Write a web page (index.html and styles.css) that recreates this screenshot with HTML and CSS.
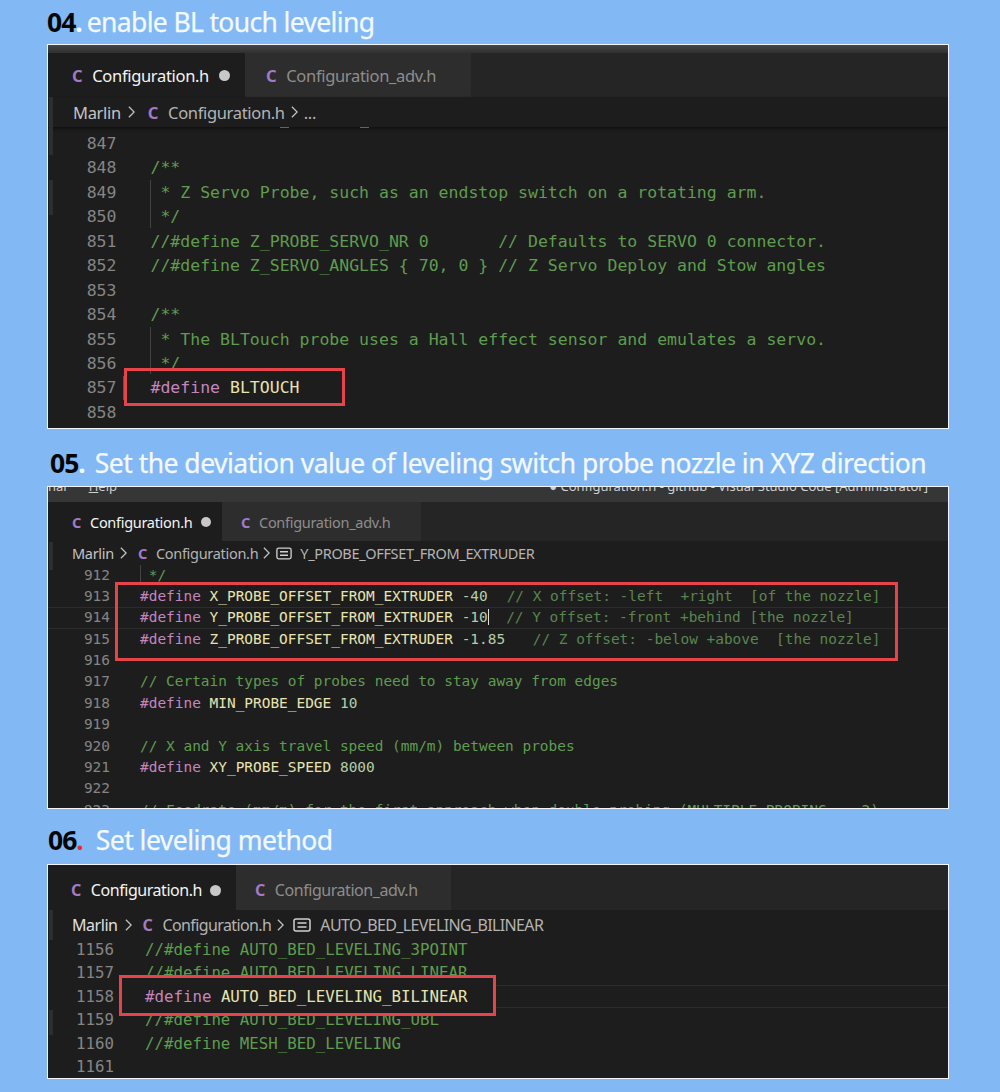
FILE: index.html
```html
<!DOCTYPE html>
<html lang="en">
<head>
<meta charset="utf-8">
<title>BL touch leveling</title>
<link rel="stylesheet" href="styles.css">
</head>
<body>
<main class="page">

<h2 class="head h1"><b>04</b><span class="dot-w">.</span><span class="t">enable BL touch leveling</span></h2>
<section class="panel p1">
  <div class="strip"></div>
  <div class="tabs">
    <div class="tab on"><i class="c">C</i><span class="name">Configuration.h</span><span class="mod"></span></div>
    <div class="tab off"><i class="c">C</i><span class="name">Configuration_adv.h</span></div>
  </div>
  <div class="crumbs"><span class="m">Marlin</span><svg class="chev" viewBox="0 0 10 16"><path d="M2 2l6 6-6 6"/></svg><i class="c">C</i><span class="name">Configuration.h</span><svg class="chev" viewBox="0 0 10 16"><path d="M2 2l6 6-6 6"/></svg><span class="sym">...</span></div>
  <div class="code">
    <div class="ln"><span class="n">847</span><span class="s"></span></div>
    <div class="ln"><span class="n">848</span><span class="s cm">/**</span></div>
    <div class="ln"><span class="n">849</span><span class="s cm"> * Z Servo Probe, such as an endstop switch on a rotating arm.</span></div>
    <div class="ln"><span class="n">850</span><span class="s cm"> */</span></div>
    <div class="ln"><span class="n">851</span><span class="s cm">//#define Z_PROBE_SERVO_NR 0       // Defaults to SERVO 0 connector.</span></div>
    <div class="ln"><span class="n">852</span><span class="s cm">//#define Z_SERVO_ANGLES { 70, 0 } // Z Servo Deploy and Stow angles</span></div>
    <div class="ln"><span class="n">853</span><span class="s"></span></div>
    <div class="ln"><span class="n">854</span><span class="s cm">/**</span></div>
    <div class="ln"><span class="n">855</span><span class="s cm"> * The BLTouch probe uses a Hall effect sensor and emulates a servo.</span></div>
    <div class="ln"><span class="n">856</span><span class="s cm"> */</span></div>
    <div class="ln top"><span class="n">857</span><span class="s"><span class="kw">#define</span> <span class="mac">BLTOUCH</span></span></div>
    <div class="ln"><span class="n">858</span><span class="s"></span></div>
  </div>
  <div class="edge e1a"></div>
  <div class="edge e1b"></div>
  <div class="us u1a"></div>
  <div class="us u1b"></div>
  <div class="guide g1a"></div>
  <div class="guide g1b"></div>
  <div class="tick t1"></div>
  <div class="box b1"></div>
</section>

<h2 class="head h2x"><b>05</b><span class="dot-w">.</span><span class="t">Set the deviation value of leveling switch probe nozzle in XYZ direction</span></h2>
<section class="panel p2">
  <div class="strip"><span class="menu">nal<span class="help"><u>H</u>elp</span></span><span class="wt">● Configuration.h - github - Visual Studio Code [Administrator]</span></div>
  <div class="tabs">
    <div class="tab on"><i class="c">C</i><span class="name">Configuration.h</span><span class="mod"></span></div>
    <div class="tab off"><i class="c">C</i><span class="name">Configuration_adv.h</span></div>
  </div>
  <div class="crumbs"><span class="m">Marlin</span><svg class="chev" viewBox="0 0 10 16"><path d="M2 2l6 6-6 6"/></svg><i class="c">C</i><span class="name">Configuration.h</span><svg class="chev" viewBox="0 0 10 16"><path d="M2 2l6 6-6 6"/></svg><svg class="symi" viewBox="0 0 18 14"><rect x="1" y="1" width="16" height="12" rx="2"/><path d="M4.5 5h9M4.5 9h9"/></svg><span class="sym">Y_PROBE_OFFSET_FROM_EXTRUDER</span></div>
  <div class="code">
    <div class="ln"><span class="n">912</span><span class="s cm"> */</span></div>
    <div class="ln"><span class="n">913</span><span class="s"><span class="kw">#define</span> <span class="mac">X_PROBE_OFFSET_FROM_EXTRUDER</span> <span class="num">-40</span>  <span class="cm dim">// X offset: -left  +right  [of the nozzle]</span></span></div>
    <div class="ln cur"><span class="n">914</span><span class="s"><span class="kw">#define</span> <span class="mac">Y_PROBE_OFFSET_FROM_EXTRUDER</span> <span class="num caret">-10</span>  <span class="cm dim">// Y offset: -front +behind [the nozzle]</span></span></div>
    <div class="ln"><span class="n">915</span><span class="s"><span class="kw">#define</span> <span class="mac">Z_PROBE_OFFSET_FROM_EXTRUDER</span> <span class="num">-1.85</span>   <span class="cm dim">// Z offset: -below +above  [the nozzle]</span></span></div>
    <div class="ln"><span class="n">916</span><span class="s"></span></div>
    <div class="ln"><span class="n">917</span><span class="s cm">// Certain types of probes need to stay away from edges</span></div>
    <div class="ln"><span class="n">918</span><span class="s"><span class="kw">#define</span> <span class="mac">MIN_PROBE_EDGE</span> <span class="num">10</span></span></div>
    <div class="ln"><span class="n">919</span><span class="s"></span></div>
    <div class="ln"><span class="n">920</span><span class="s cm">// X and Y axis travel speed (mm/m) between probes</span></div>
    <div class="ln"><span class="n">921</span><span class="s"><span class="kw">#define</span> <span class="mac">XY_PROBE_SPEED</span> <span class="num">8000</span></span></div>
    <div class="ln"><span class="n">922</span><span class="s"></span></div>
    <div class="ln"><span class="n">923</span><span class="s cm">// Feedrate (mm/m) for the first approach when double-probing (MULTIPLE_PROBING == 2)</span></div>
  </div>
  <div class="edge e2"></div>
  <div class="guide g2"></div>
  <div class="box b2"></div>
</section>

<h2 class="head h3x"><b>06</b><span class="dot-r">.</span><span class="t">Set leveling method</span></h2>
<section class="panel p3">
  <div class="tabs">
    <div class="tab on"><i class="c">C</i><span class="name">Configuration.h</span><span class="mod"></span></div>
    <div class="tab off"><i class="c">C</i><span class="name">Configuration_adv.h</span></div>
  </div>
  <div class="crumbs"><span class="m">Marlin</span><svg class="chev" viewBox="0 0 10 16"><path d="M2 2l6 6-6 6"/></svg><i class="c">C</i><span class="name">Configuration.h</span><svg class="chev" viewBox="0 0 10 16"><path d="M2 2l6 6-6 6"/></svg><svg class="symi" viewBox="0 0 18 14"><rect x="1" y="1" width="16" height="12" rx="2"/><path d="M4.5 5h9M4.5 9h9"/></svg><span class="sym">AUTO_BED_LEVELING_BILINEAR</span></div>
  <div class="code">
    <div class="ln"><span class="n">1156</span><span class="s cm">//#define AUTO_BED_LEVELING_3POINT</span></div>
    <div class="ln"><span class="n">1157</span><span class="s cm">//#define AUTO_BED_LEVELING_LINEAR</span></div>
    <div class="ln top"><span class="n">1158</span><span class="s"><span class="kw">#define</span> <span class="mac">AUTO_BED_LEVELING_BILINEAR</span></span></div>
    <div class="ln"><span class="n">1159</span><span class="s cm">//#define AUTO_BED_LEVELING_UBL</span></div>
    <div class="ln"><span class="n">1160</span><span class="s cm">//#define MESH_BED_LEVELING</span></div>
    <div class="ln"><span class="n">1161</span><span class="s"></span></div>
  </div>
  <div class="edge e3a"></div>
  <div class="edge e3b"></div>
  <div class="hl"></div>
  <div class="tick t3"></div>
  <div class="box b3"></div>
</section>

</main>
</body>
</html>
```
FILE: styles.css
```css
* { box-sizing: border-box; }
html, body { margin: 0; padding: 0; }
body { background: #82b8f4; }
.page { width: 1000px; height: 1092px; padding-left: 47px; overflow: hidden; }

/* headings */
.head {
  margin: 0;
  width: 902px;
  display: flex;
  align-items: baseline;
  font-family: "Noto Sans", "Open Sans", sans-serif;
  font-weight: 400;
  font-size: 27px;
  color: #f4f9ff;
  white-space: nowrap;
}
.head b { color: #050505; font-weight: 700; letter-spacing: -1px; }
.dot-w { color: #f4f9ff; font-weight: 700; }
.dot-r { color: #e0322c; font-weight: 700; }
.t { -webkit-text-stroke: .25px #f4f9ff; }
.h1 { height: 44px; line-height: 44px; font-size: 26.5px; }
.h1 .t { margin-left: 4px; letter-spacing: -.65px; }
.h2x { height: 57px; padding: 15px 0 0 3px; line-height: 38px; font-size: 26.5px; }
.h2x .t { margin-left: 9px; letter-spacing: -.52px; }
.h3x { height: 55px; padding: 12px 0 0 1px; line-height: 38px; font-size: 26.5px; }
.h3x .t { margin-left: 12px; letter-spacing: -.53px; }

/* editor panels */
.panel {
  position: relative;
  width: 902px;
  border: 1px solid #f2f6fb;
  background: #1d1d1d;
  overflow: hidden;
  font-family: "Noto Sans", "Open Sans", sans-serif;
}
.p1 { height: 385px; --fs: 16.5px; --lh: 24.45px; --gut: 68.5px; --gap: 34px; }
.p2 { height: 323px; --fs: 14.45px; --lh: 21.4px; --gut: 62px; --gap: 30px; }
.p3 { height: 215px; --fs: 15.75px; --lh: 23.4px; --gut: 66px; --gap: 31px; }

.strip { background: #3a3a3a; overflow: hidden; }
.p1 .strip { height: 8px; background: linear-gradient(#444, #303030); }
.p2 .strip {
  height: 15px;
  display: flex;
  justify-content: space-between;
  background: #363636;
  color: #d0d0d0;
  font-size: 13px;
  line-height: 15px;
}
.menu { margin-top: -8px; }
.help { margin-left: 22px; }
.wt { margin-top: -8px; margin-right: 20px; }

.tabs { display: flex; background: #252525; }
.p1 .tabs { height: 44px; }
.p2 .tabs { height: 39px; }
.p3 .tabs { height: 45px; }
.tab { display: flex; align-items: center; white-space: nowrap; }
.tab.on { background: #1d1d1d; color: #f4f4f4; }
.tab.off { background: #2d2d2d; color: #8d8d8d; }
.c { font-style: normal; font-weight: 700; color: #a27ac8; }
.mod { border-radius: 50%; background: #c8c8c8; }

.p1 .tab { font-size: 16.5px; letter-spacing: -.33px; padding-top: 1px; }
.p1 .tab.on { width: 197px; padding-left: 24px; }
.p1 .tab.off { width: 226px; padding-left: 21px; }
.p1 .tab .name { margin-left: 10px; }
.p1 .mod { width: 11px; height: 11px; margin-left: 10px; }

.p2 .tab { font-size: 14.5px; letter-spacing: -.3px; }
.p2 .tab.on { width: 174px; padding-left: 24px; }
.p2 .tab.off { width: 199px; padding-left: 19px; }
.p2 .tab .name { margin-left: 9px; }
.p2 .mod { width: 10px; height: 10px; margin-left: 9px; }

.p3 .tab { font-size: 16px; letter-spacing: -.45px; padding-top: 5px; }
.p3 .tab.on { width: 188px; padding-left: 23px; }
.p3 .tab.off { width: 215px; padding-left: 19px; }
.p3 .tab .name { margin-left: 10px; }
.p3 .mod { width: 11px; height: 11px; margin-left: 8px; }

.crumbs {
  display: flex;
  align-items: center;
  color: #b4b4b4;
  white-space: nowrap;
}
.crumbs .m { color: #c4c4c4; }
.chev { width: 9px; height: 14px; fill: none; stroke: #c4c4c4; stroke-width: 1.4; }
.symi { fill: none; stroke: #d0d0d0; stroke-width: 1.5; }
.p1 .crumbs { height: 30px; padding-left: 25px; font-size: 16.5px; letter-spacing: -.33px; box-shadow: 0 2px 3px #111; position: relative; }
.p1 .crumbs .chev { margin: 0 12px 0 6px; }
.p1 .crumbs .name { margin-left: 10px; }
.p1 .crumbs .name + .chev { margin: 0 5px 0 5px; }
.p2 .crumbs { height: 22px; padding: 2px 0 0 24px; font-size: 14.5px; letter-spacing: -.3px; }
.p2 .crumbs .chev { margin: 0 10px 0 5px; }
.p2 .crumbs .name { margin-left: 9px; }
.p2 .crumbs .name + .chev { margin: 0 5px 0 4px; }
.p2 .symi { width: 16px; height: 13px; margin-right: 8px; }
.p2 .sym { letter-spacing: -.35px; }
.p3 .crumbs { height: 27px; padding: 2px 0 0 24px; font-size: 16px; letter-spacing: -.45px; }
.p3 .crumbs .m { color: #e0e0e0; }
.p3 .crumbs .chev { margin: 0 10px 0 6px; }
.p3 .crumbs .name { margin-left: 10px; letter-spacing: -.6px; }
.p3 .crumbs .name + .chev { margin: 0 8px 0 5px; }
.p3 .symi { width: 18px; height: 14px; margin-right: 9px; }
.p3 .sym { letter-spacing: -.64px; }

/* code */
.code {
  font-family: "DejaVu Sans Mono", "Liberation Mono", monospace;
  font-size: var(--fs);
  line-height: var(--lh);
}
.p1 .code { padding-top: 5px; }
.p2 .code { padding-top: 1.5px; }
.p3 .code { padding-top: 1px; }
.ln { display: flex; height: var(--lh); white-space: pre; }
.n { width: var(--gut); flex: none; text-align: right; color: #858585; }
.s { margin-left: var(--gap); color: #d4d4d4; }
.cm { color: #5f9c50; }
.cm.dim { color: #5a8550; margin-left: 1.5px; }
.kw { color: #c586c0; }
.mac { color: #e8e4b0; }
.num { color: #b5cea8; }
.caret { border-right: 1.5px solid #e0e0e0; margin-right: -1.5px; }
.cur { box-shadow: inset 0 1px 0 #2c2c2c, inset 0 -1px 0 #2c2c2c; }
.top { position: relative; z-index: 2; }

/* overlays */
.edge { position: absolute; left: 1px; width: 4px; background: #2e2e2e; }
.e1a { top: 52px; height: 58px; }
.e1b { top: 135px; height: 35px; }
.e2 { top: 55px; height: 28px; }
.e3a { top: 45px; height: 30px; }
.e3b { top: 145px; height: 25px; }
.us { position: absolute; top: 82px; width: 9px; height: 1px; background: #6f6442; }
.u1a { left: 232px; }
.u1b { left: 312px; }
.hl { position: absolute; left: 71px; right: 0; top: 120px; height: 23px; border-top: 1px solid #2c2c2c; border-bottom: 1px solid #2c2c2c; }
.guide { position: absolute; width: 1px; background: #444; }
.g1a { left: 102px; top: 135px; height: 48px; }
.g1b { left: 102px; top: 282px; height: 47px; }
.g2 { left: 92px; top: 78px; height: 18px; }
.tick { position: absolute; width: 2px; background: #2b6a7d; z-index: 1; }
.t1 { left: 75px; top: 331px; height: 24px; }
.t3 { left: 74px; top: 118px; height: 24px; }
.box { position: absolute; border: 3px solid #e6434a; z-index: 1; }
.b1 { left: 76px; top: 323px; width: 221px; height: 38px; }
.b2 { left: 67px; top: 95px; width: 783px; height: 79px; }
.b3 { left: 71px; top: 110px; width: 377px; height: 41px; background: #1d1d1d; }
```
